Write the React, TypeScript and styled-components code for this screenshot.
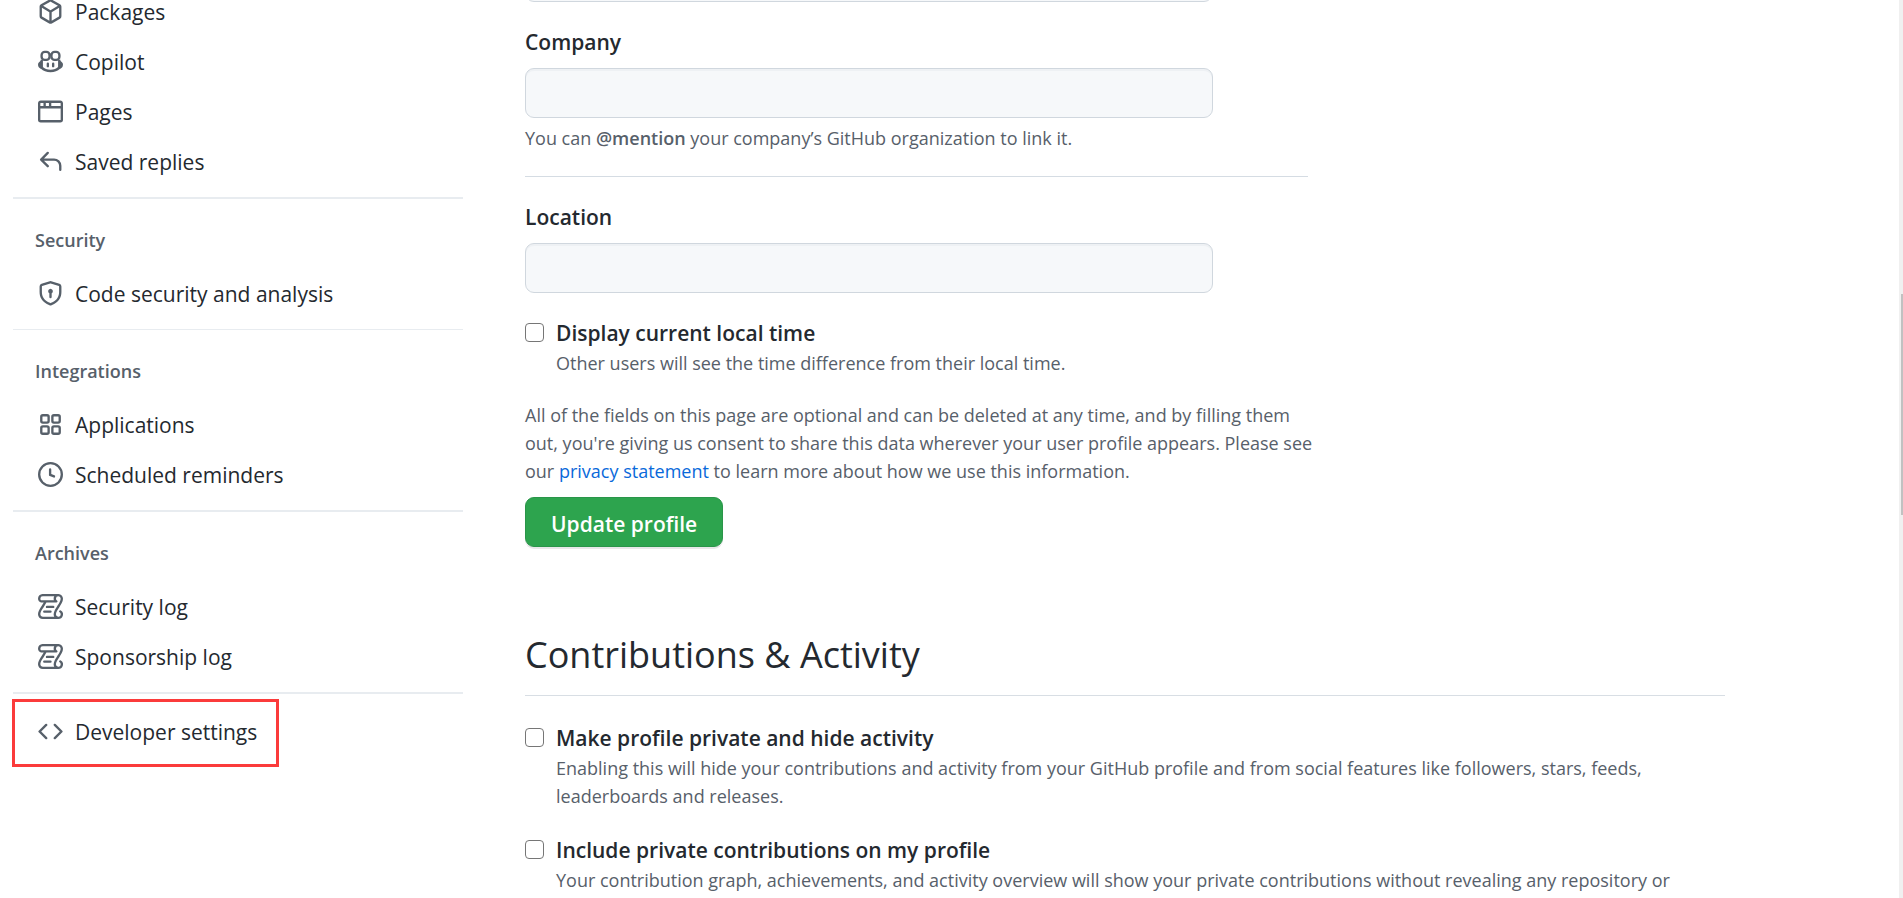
import React from 'react';
import styled, { createGlobalStyle } from 'styled-components';

const GlobalStyle = createGlobalStyle`
  *, *::before, *::after { box-sizing: border-box; }
  body {
    margin: 0;
    background: #fff;
    color: #24292f;
    font-family: "Open Sans", "Noto Sans", sans-serif;
    font-size: 21px;
  }
`;

const Viewport = styled.div`
  display: flex;
  height: 100vh;
  overflow: hidden;
`;

/* The page is shown part-way down its scroll range. */
const Page = styled.div`
  flex: 1;
  display: flex;
  align-items: flex-start;
  gap: 62px;
  margin-top: -48px;
  padding: 0 174px 0 13px;
`;

const Sidebar = styled.nav`
  flex: 0 0 450px;
  padding-top: 35px;
`;

const NavList = styled.ul`
  list-style: none;
  margin: 0;
  padding: 0;
`;

const NavLink = styled.a`
  display: flex;
  align-items: center;
  gap: 12px;
  height: 50px;
  padding: 0 25px;
  color: #24292f;
  line-height: 32px;
  text-decoration: none;
  white-space: nowrap;
`;

const Glyph = styled.svg`
  flex: none;
  width: 25px;
  height: 25px;
  margin-bottom: 2px;
  fill: #57606a;
`;

const NavDivider = styled.hr<{ $thin?: boolean }>`
  height: ${({ $thin }) => ($thin ? 1 : 2)}px;
  margin: 10px 0 0;
  border: 0;
  background: #e8ecf0;
`;

const NavHeading = styled.h3`
  display: flex;
  align-items: center;
  height: 70px;
  margin: 0;
  padding: 14px 22px 2px;
  color: #57606a;
  font-size: 18px;
  font-weight: 600;
  line-height: 28px;
`;

const Marked = styled.div`
  width: 267px;
  height: 68px;
  margin: 5px 0 0 -1px;
  padding: 5px 0;
  border: 3px solid #fb3b3b;

  ${NavLink} { padding: 0 23px; }
`;

const Main = styled.main`
  flex: 1;
  min-width: 0;
`;

const Form = styled.form`
  max-width: 798px;
`;

const Label = styled.label`
  display: block;
  margin-bottom: 10px;
  font-weight: 600;
  line-height: 32px;
`;

const Field = styled.div`
  padding-top: 24px;
`;

const TextInput = styled.input`
  display: block;
  width: 100%;
  max-width: 688px;
  height: 50px;
  padding: 8px 18px;
  border: 1px solid #d0d7de;
  border-radius: 9px;
  background: #f6f8fa;
  box-shadow: inset 0 2px 0 rgba(208, 215, 222, 0.2);
  font: inherit;
`;

const Note = styled.p`
  margin: 0;
  color: #57606a;
  font-size: 18px;
  line-height: 28px;

  a { color: #0969da; text-decoration: none; }
  strong { font-weight: 600; }
`;

const FieldNote = styled(Note)`
  margin-top: 6px;
`;

const FieldDivider = styled.hr`
  max-width: 783px;
  height: 1px;
  margin: 24px 0 0;
  border: 0;
  background: #d5dce3;
`;

const CheckRow = styled.div`
  display: grid;
  grid-template-columns: 19px 1fr;
  column-gap: 12px;
  padding-top: 24px;
`;

const CheckBox = styled.input`
  appearance: none;
  width: 19px;
  height: 19px;
  margin: 6px 0 0;
  border: 1px solid #767676;
  border-radius: 4px;
  background: #fff;
`;

const CheckLabel = styled.label`
  font-weight: 600;
  line-height: 32px;
`;

const CheckNote = styled(Note)`
  grid-column: 2;
`;

const Consent = styled(Note)`
  margin-top: 24px;
`;

const Submit = styled.button`
  height: 50px;
  margin-top: 12px;
  padding: 3px 25px 0;
  border: 1px solid #2a9549;
  border-radius: 9px;
  background: #2da44e;
  box-shadow: 0 2px 0 rgba(27, 31, 36, 0.1);
  color: #fff;
  font: inherit;
  font-weight: 600;
  line-height: 32px;
`;

const SectionTitle = styled.h2`
  margin: 80px 0 2px;
  padding-bottom: 12px;
  border-bottom: 1px solid #d8dee4;
  font-size: 36px;
  font-weight: 400;
  line-height: 56px;
`;

const ScrollTrack = styled.div`
  flex: none;
  display: flex;
  flex-direction: column;
  align-items: flex-end;
  width: 4px;
  background: #f0f0f0;
`;

const TrackSpace = styled.div<{ $share: number }>`
  flex: ${({ $share }) => $share};
`;

const ScrollThumb = styled.div`
  flex: 221;
  width: 2px;
  background: #c1c1c1;
`;

const paths = {
  package:
    'm8.878.392 5.25 3.045c.54.314.872.89.872 1.514v6.098a1.75 1.75 0 0 1-.872 1.514l-5.25 3.045a1.75 1.75 0 0 1-1.756 0l-5.25-3.045A1.75 1.75 0 0 1 1 11.049V4.951c0-.624.332-1.201.872-1.514L7.122.392a1.75 1.75 0 0 1 1.756 0ZM7.875 1.69l-4.63 2.685L8 7.133l4.755-2.758-4.63-2.685a.248.248 0 0 0-.25 0ZM2.5 5.677v5.372c0 .09.047.171.125.216l4.625 2.683V8.432Zm6.25 8.271 4.625-2.683a.25.25 0 0 0 .125-.216V5.677L8.75 8.432Z',
  browser:
    'M0 2.75C0 1.784.784 1 1.75 1h12.5c.966 0 1.75.784 1.75 1.75v10.5A1.75 1.75 0 0 1 14.25 15H1.75A1.75 1.75 0 0 1 0 13.25ZM14.5 6h-13v7.25c0 .138.112.25.25.25h12.5a.25.25 0 0 0 .25-.25Zm-6-3.5v2h6V2.75a.25.25 0 0 0-.25-.25ZM5 2.5v2h2v-2Zm-3.25 0a.25.25 0 0 0-.25.25V4.5h2v-2Z',
  reply:
    'M6.78 1.97a.75.75 0 0 1 0 1.06L3.81 6h6.44A4.75 4.75 0 0 1 15 10.75v2.5a.75.75 0 0 1-1.5 0v-2.5a3.25 3.25 0 0 0-3.25-3.25H3.81l2.97 2.97a.749.749 0 0 1-.326 1.275.749.749 0 0 1-.734-.215L1.47 7.28a.75.75 0 0 1 0-1.06l4.25-4.25a.75.75 0 0 1 1.06 0Z',
  shield:
    'm8.533.133 5.25 1.68A1.75 1.75 0 0 1 15 3.48V7c0 1.566-.32 3.182-1.303 4.682-.983 1.498-2.585 2.813-5.032 3.855a1.697 1.697 0 0 1-1.33 0c-2.447-1.042-4.049-2.357-5.032-3.855C1.32 10.182 1 8.566 1 7V3.48a1.755 1.755 0 0 1 1.217-1.667l5.25-1.68a1.748 1.748 0 0 1 1.066 0Zm-.61 1.429.001.001-5.25 1.68a.251.251 0 0 0-.174.237V7c0 1.36.275 2.666 1.057 3.859.784 1.194 2.121 2.342 4.366 3.298a.196.196 0 0 0 .154 0c2.245-.957 3.582-2.103 4.366-3.297C13.225 9.666 13.5 8.358 13.5 7V3.48a.25.25 0 0 0-.174-.238l-5.25-1.68a.25.25 0 0 0-.153 0ZM9.5 6.5c0 .536-.286 1.032-.75 1.3v2.45a.75.75 0 0 1-1.5 0V7.8A1.5 1.5 0 1 1 9.5 6.5Z',
  clock:
    'M8 0a8 8 0 1 1 0 16A8 8 0 0 1 8 0ZM1.5 8a6.5 6.5 0 1 0 13 0 6.5 6.5 0 0 0-13 0Zm7-3.25v2.992l2.028.812a.75.75 0 0 1-.557 1.392l-2.5-1A.751.751 0 0 1 7 8.25v-3.5a.75.75 0 0 1 1.5 0Z',
  log:
    'M5 8.25a.75.75 0 0 1 .75-.75h4a.75.75 0 0 1 0 1.5h-4A.75.75 0 0 1 5 8.25ZM4 10.5A.75.75 0 0 0 4 12h4a.75.75 0 0 0 0-1.5H4ZM13-.005c1.654 0 3 1.328 3 3 0 .982-.338 1.933-.783 2.818-.443.879-1.028 1.758-1.582 2.588l-.011.017c-.568.853-1.104 1.659-1.501 2.446-.398.789-.623 1.494-.623 2.136a1.5 1.5 0 1 0 2.333-1.248.75.75 0 0 1 .834-1.246A3 3 0 0 1 13 16H3a3 3 0 0 1-3-3c0-1.582.891-3.135 1.777-4.506.209-.322.418-.637.623-.946.473-.709.923-1.386 1.287-2.048H2.51c-.576 0-1.381-.133-1.907-.783A2.68 2.68 0 0 1 0 2.995a3 3 0 0 1 3-3Zm0 1.5a1.5 1.5 0 0 0-1.5 1.5c0 .476.223.834.667 1.132A.75.75 0 0 1 11.75 5.5H5.368c-.467 1.003-1.141 2.015-1.773 2.963-.192.289-.381.571-.558.845C2.13 10.711 1.5 11.916 1.5 13A1.5 1.5 0 0 0 3 14.5h7.401A2.989 2.989 0 0 1 10 13c0-.979.338-1.928.784-2.812.441-.874 1.023-1.748 1.575-2.576l.017-.026c.568-.853 1.103-1.658 1.501-2.448.398-.79.623-1.497.623-2.143 0-.838-.669-1.5-1.5-1.5Zm-10 0a1.5 1.5 0 0 0-1.5 1.5c0 .321.1.569.27.778.097.12.325.227.74.227h7.674A2.737 2.737 0 0 1 10 2.995c0-.546.146-1.059.401-1.5Z',
  code:
    'm11.28 3.22 4.25 4.25a.75.75 0 0 1 0 1.06l-4.25 4.25a.749.749 0 0 1-1.275-.326.749.749 0 0 1 .215-.734L13.94 8l-3.72-3.72a.749.749 0 0 1 .326-1.275.749.749 0 0 1 .734.215Zm-6.56 0a.751.751 0 0 1 1.042.018.751.751 0 0 1 .018 1.042L2.06 8l3.72 3.72a.749.749 0 0 1-.326 1.275.749.749 0 0 1-.734-.215L.47 8.53a.75.75 0 0 1 0-1.06Z',
};

type IconName = keyof typeof paths | 'copilot' | 'apps';

function Icon({ name }: { name: IconName }) {
  if (name === 'copilot') {
    return (
      <Glyph viewBox="0 0 16 16" aria-hidden="true">
        <g fill="none" stroke="#57606a" strokeWidth="1.5">
          <rect x="2.3" y="1.8" width="5.1" height="5.2" rx="2" />
          <rect x="8.6" y="1.8" width="5.1" height="5.2" rx="2" />
          <path d="M7 3.6h2" />
          <path d="M2.4 6.8v5.1C3.6 13.2 5.7 14.1 8 14.1s4.4-.9 5.6-2.2V6.8" />
          <path d="M6.3 9.4v1.6M9.7 9.4v1.6" strokeLinecap="round" />
        </g>
        <path d="M2.3 7.3C1 7.7 0 8.8 0 10c0 1.3.9 2.2 2.5 3Z" />
        <path d="M13.7 7.3C15 7.7 16 8.8 16 10c0 1.3-.9 2.2-2.5 3Z" />
      </Glyph>
    );
  }
  if (name === 'apps') {
    return (
      <Glyph viewBox="0 0 16 16" aria-hidden="true">
        <g fill="none" stroke="#57606a" strokeWidth="1.5">
          <rect x="2.1" y="2.1" width="4.7" height="4.7" rx="1" />
          <rect x="9.2" y="2.1" width="4.7" height="4.7" rx="1" />
          <rect x="2.1" y="9.2" width="4.7" height="4.7" rx="1" />
          <rect x="9.2" y="9.2" width="4.7" height="4.7" rx="1" />
        </g>
      </Glyph>
    );
  }
  return (
    <Glyph viewBox="0 0 16 16" aria-hidden="true">
      <path fillRule="evenodd" d={paths[name]} />
    </Glyph>
  );
}

type Item = { icon: IconName; text: string };

function NavItems({ items }: { items: Item[] }) {
  return (
    <NavList>
      {items.map(({ icon, text }) => (
        <li key={text}>
          <NavLink href="#">
            <Icon name={icon} />
            {text}
          </NavLink>
        </li>
      ))}
    </NavList>
  );
}

function CheckOption({ id, label, children }: { id: string; label: string; children: React.ReactNode }) {
  return (
    <CheckRow>
      <CheckBox type="checkbox" id={id} />
      <CheckLabel htmlFor={id}>{label}</CheckLabel>
      <CheckNote>{children}</CheckNote>
    </CheckRow>
  );
}

export default function App() {
  return (
    <Viewport>
      <GlobalStyle />
      <Page>
        <Sidebar aria-label="Settings">
          <NavItems
            items={[
              { icon: 'package', text: 'Packages' },
              { icon: 'copilot', text: 'Copilot' },
              { icon: 'browser', text: 'Pages' },
              { icon: 'reply', text: 'Saved replies' },
            ]}
          />
          <NavDivider />
          <NavHeading>Security</NavHeading>
          <NavItems items={[{ icon: 'shield', text: 'Code security and analysis' }]} />
          <NavDivider $thin />
          <NavHeading>Integrations</NavHeading>
          <NavItems
            items={[
              { icon: 'apps', text: 'Applications' },
              { icon: 'clock', text: 'Scheduled reminders' },
            ]}
          />
          <NavDivider />
          <NavHeading>Archives</NavHeading>
          <NavItems
            items={[
              { icon: 'log', text: 'Security log' },
              { icon: 'log', text: 'Sponsorship log' },
            ]}
          />
          <NavDivider />
          <Marked>
            <NavItems items={[{ icon: 'code', text: 'Developer settings' }]} />
          </Marked>
        </Sidebar>

        <Main>
          <Form>
            <TextInput type="text" aria-label="Social account" />
            <Field>
              <Label htmlFor="company">Company</Label>
              <TextInput type="text" id="company" />
              <FieldNote>
                You can <strong>@mention</strong> your company’s GitHub organization to link it.
              </FieldNote>
            </Field>
            <FieldDivider />
            <Field>
              <Label htmlFor="location">Location</Label>
              <TextInput type="text" id="location" />
            </Field>
            <CheckOption id="local-time" label="Display current local time">
              Other users will see the time difference from their local time.
            </CheckOption>
            <Consent>
              All of the fields on this page are optional and can be deleted at any time, and by filling them out,
              you're giving us consent to share this data wherever your user profile appears. Please see our{' '}
              <a href="#">privacy statement</a> to learn more about how we use this information.
            </Consent>
            <Submit type="button">Update profile</Submit>
          </Form>

          <SectionTitle>Contributions &amp; Activity</SectionTitle>
          <CheckOption id="private-profile" label="Make profile private and hide activity">
            Enabling this will hide your contributions and activity from your GitHub profile and from social features
            like followers, stars, feeds, leaderboards and releases.
          </CheckOption>
          <CheckOption id="private-contributions" label="Include private contributions on my profile">
            Your contribution graph, achievements, and activity overview will show your private contributions without
            revealing any repository or organization information.
          </CheckOption>
        </Main>
      </Page>
      <ScrollTrack aria-hidden="true">
        <TrackSpace $share={294} />
        <ScrollThumb />
        <TrackSpace $share={383} />
      </ScrollTrack>
    </Viewport>
  );
}
